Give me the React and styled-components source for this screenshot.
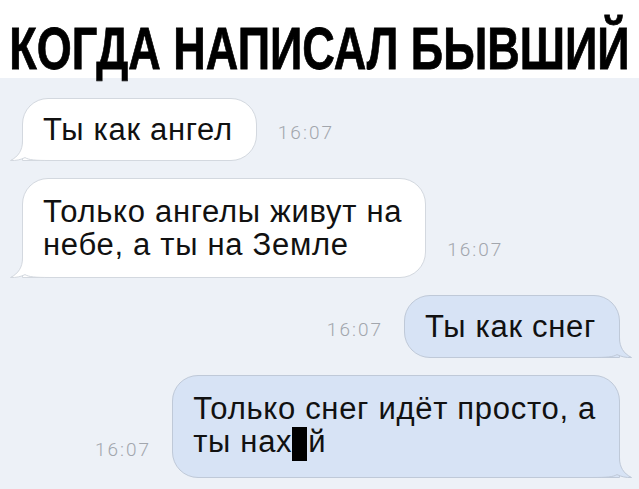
import React from "react";
import styled, { createGlobalStyle } from "styled-components";

const GlobalStyle = createGlobalStyle`
  html, body {
    margin: 0;
    padding: 0;
    background: #edf1f7;
  }
  #root {
    width: 639px;
    height: 489px;
    overflow: hidden;
  }
`;

const Page = styled.div`
  width: 639px;
  height: 489px;
  display: flex;
  flex-direction: column;
  background: #edf1f7;
  font-family: "Liberation Sans", Arial, sans-serif;
`;

const Title = styled.div`
  height: 78px;
  box-sizing: border-box;
  padding-top: 26px;
  background: #fff;
  display: flex;
  justify-content: center;
`;

const TitleText = styled.h1`
  margin: 0;
  font-family: "Liberation Sans", Arial, sans-serif;
  font-weight: 700;
  font-size: 45px;
  line-height: 36px;
  color: #000;
  white-space: nowrap;
  letter-spacing: 0;
  -webkit-text-stroke: 0.6px #000;
  transform: scaleY(1.3);
  transform-origin: center top;
`;

const Chat = styled.div`
  flex: 1;
  display: flex;
  flex-direction: column;
  gap: 17px;
  padding: 20px 19px 0 22px;
`;

const Row = styled.div`
  display: flex;
  justify-content: ${(p) => (p.$out ? "flex-end" : "flex-start")};
  gap: 21px;
`;

const Bubble = styled.div`
  position: relative;
  box-sizing: border-box;
  padding: 14px 23px 14px 20px;
  min-height: 62px;
  border-radius: 26px;
  border: 1px solid ${(p) => (p.$out ? "#bfc9d8" : "#d3d8df")};
  background: ${(p) => (p.$out ? "#d7e3f5" : "#ffffff")};
  ${(p) => (p.$out ? "border-bottom-right-radius: 0;" : "border-bottom-left-radius: 0;")}
  font-size: 31px;
  line-height: 33px;
  letter-spacing: 0.7px;
  color: #111;
  white-space: nowrap;
  ${(p) => p.$tall && "padding-top: 16px; padding-bottom: 16px;"}
`;

const Msg = styled.span`
  position: relative;
  z-index: 1;
`;

const TailSvg = styled.svg`
  position: absolute;
  bottom: -1px;
  ${(p) => (p.$out ? "right: -13px; transform: scaleX(-1);" : "left: -13px;")}
  width: 40px;
  height: 28px;
  overflow: visible;
`;

const Time = styled.span`
  align-self: flex-end;
  margin-bottom: 19px;
  font-family: Roboto, "Liberation Sans", sans-serif;
  font-weight: 300;
  font-size: 19px;
  line-height: 18px;
  letter-spacing: 2px;
  color: #a2a6ad;
`;

const Censor = styled.span`
  display: inline-block;
  width: 15px;
  height: 34px;
  margin: 0 1px 0 0;
  vertical-align: -9px;
  background: #000;
  color: transparent;
  overflow: hidden;
`;

function Tail({ out }) {
  const fill = out ? "#d7e3f5" : "#ffffff";
  const stroke = out ? "#bfc9d8" : "#d3d8df";
  return (
    <TailSvg $out={out} viewBox="0 0 40 28">
      <path
        d="M12.5 0 L12.5 8 C12.5 17 8.5 23.5 0.5 27.5 C6 27.8 11 26.6 15 24.6 C19 27 25 27.5 40 27.5 L40 20 L17 20 L17 0 Z"
        fill={fill}
      />
      <path
        d="M12.5 0 L12.5 8 C12.5 17 8.5 23.5 0.5 27.5 C6 27.8 11 26.6 15 24.6 C19 27 25 27.5 40 27.5"
        fill="none"
        stroke={stroke}
        strokeWidth="1"
      />
    </TailSvg>
  );
}

function Message({ out, tall, time, children }) {
  const bubble = (
    <Bubble $out={out} $tall={tall}>
      <Tail out={out} />
      <Msg>{children}</Msg>
    </Bubble>
  );
  return (
    <Row $out={out}>
      {out && <Time>{time}</Time>}
      {bubble}
      {!out && <Time>{time}</Time>}
    </Row>
  );
}

export default function App() {
  return (
    <>
      <GlobalStyle />
      <Page>
        <Title>
          <TitleText>КОГДА НАПИСАЛ БЫВШИЙ</TitleText>
        </Title>
        <Chat>
          <Message time="16:07">Ты как ангел</Message>
          <Message time="16:07" tall>
            Только ангелы живут на
            <br />
            небе, а ты на Земле
          </Message>
          <Message out time="16:07">
            Ты как снег
          </Message>
          <Message out tall time="16:07">
            Только снег идёт просто, а
            <br />
            ты нах<Censor>у</Censor>й
          </Message>
        </Chat>
      </Page>
    </>
  );
}
